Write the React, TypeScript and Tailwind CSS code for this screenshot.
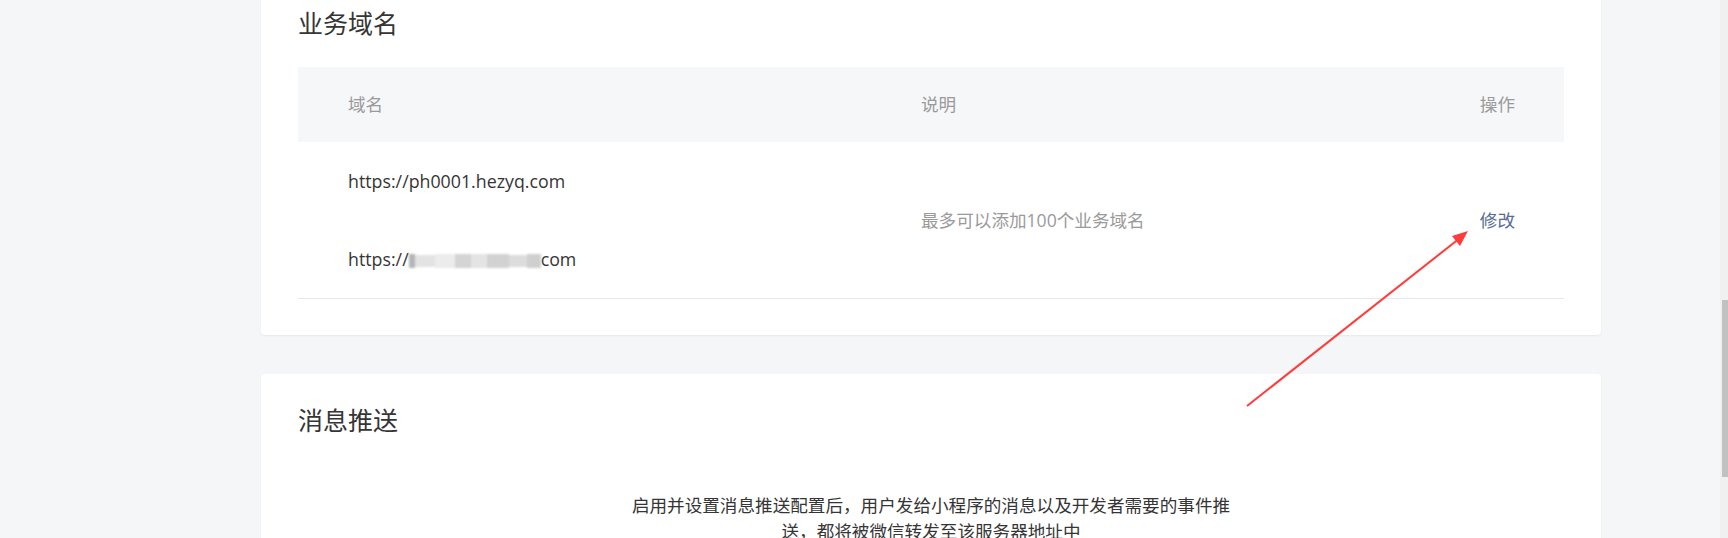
import React from "react";

const font = { fontFamily: '"Open Sans", "Noto Sans CJK SC", sans-serif' };

const domains = ["https://ph0001.hezyq.com"];

const Blurred: React.FC = () => (
  <span className="inline-flex items-center h-[16px] align-middle blur-[1px]">
    <span className="inline-block w-[6px] h-[14px] bg-[#b5b5b5]" />
    <span className="inline-block w-[20px] h-[12px] bg-[#e3e3e3]" />
    <span className="inline-block w-[20px] h-[14px] bg-[#ececec]" />
    <span className="inline-block w-[16px] h-[14px] bg-[#d4d4d4]" />
    <span className="inline-block w-[16px] h-[14px] bg-[#e4e4e4]" />
    <span className="inline-block w-[22px] h-[14px] bg-[#d2d2d2]" />
    <span className="inline-block w-[18px] h-[12px] bg-[#dcdcdc]" />
    <span className="inline-block w-[14px] h-[14px] bg-[#cfcfcf]" />
  </span>
);

const App: React.FC = () => {
  return (
    <div className="relative flex h-[538px] overflow-hidden bg-[#f5f6f8] text-[#353535]" style={font}>
      <div className="flex-1 pl-[261px]">
        {/* 业务域名 */}
        <div className="-mt-[23px] w-[1340px] rounded-[4px] bg-white px-[37px] pt-[28px] pb-[36px] shadow-[0_1px_2px_rgba(0,0,0,0.06)]">
          <h2 className="text-[25px] leading-[36px] font-normal">业务域名</h2>
          <div className="mt-[26px]">
            <div className="flex h-[75px] items-center bg-[#f6f7f9] text-[17.6px] text-[#9a9a9a]">
              <div className="w-[623px] pl-[50px]">域名</div>
              <div className="flex-1">说明</div>
              <div className="pr-[49px]">操作</div>
            </div>
            <div className="flex items-center border-b border-[#e7e7eb] text-[17.6px]">
              <div className="w-[623px] pl-[50px] pt-[26px] pb-[26px] flex flex-col gap-[52px] leading-[26px] text-[17.8px]">
                {domains.map((d) => (
                  <div key={d}>{d}</div>
                ))}
                <div className="whitespace-nowrap">
                  https://
                  <Blurred />
                  com
                </div>
              </div>
              <div className="flex-1 text-[#9a9a9a]">最多可以添加100个业务域名</div>
              <div className="pr-[49px] text-[#576b95]">修改</div>
            </div>
          </div>
        </div>

        {/* 消息推送 */}
        <div className="mt-[39px] w-[1340px] rounded-[4px] bg-white px-[37px] pt-[28px] pb-[40px] shadow-[0_1px_2px_rgba(0,0,0,0.06)]">
          <h2 className="text-[25px] leading-[36px] font-normal">消息推送</h2>
          <p className="mx-auto mt-[54px] max-w-[602px] text-center text-[17.6px] leading-[26px]">
            启用并设置消息推送配置后，用户发给小程序的消息以及开发者需要的事件推送，都将被微信转发至该服务器地址中
          </p>
        </div>
      </div>

      {/* scrollbar */}
      <div className="w-[8px] bg-[#f0f0f0] pt-[300px] pl-[2px]">
        <div className="h-[177px] bg-[#c1c1c1]" />
      </div>

      {/* annotation arrow */}
      <svg className="pointer-events-none absolute inset-0" width="1728" height="538">
        <line x1="1247" y1="406" x2="1460" y2="238" stroke="#ff3b3b" strokeWidth="2" />
        <polygon points="1468,231 1452,236 1460,246" fill="#ff3b3b" />
      </svg>
    </div>
  );
};

export default App;
